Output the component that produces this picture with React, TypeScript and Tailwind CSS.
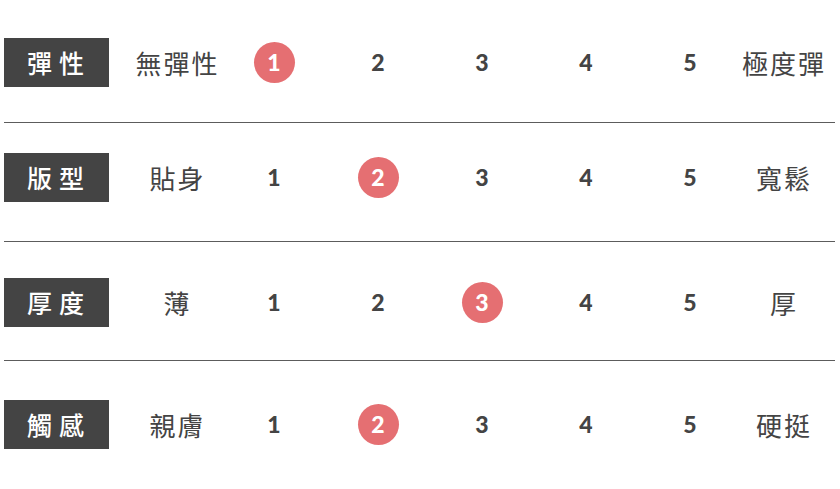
const rows = [
  { label: '彈性', low: '無彈性', high: '極度彈', value: 1, pad: 'pt-[38px] pb-[35px]' },
  { label: '版型', low: '貼身', high: '寬鬆', value: 2, pad: 'pt-[30px] pb-[39px]' },
  { label: '厚度', low: '薄', high: '厚', value: 3, pad: 'pt-[36px] pb-[33px]' },
  { label: '觸感', low: '親膚', high: '硬挺', value: 2, pad: 'pt-[39px] pb-[30px]' },
]

const cjk = 'font-["Noto_Sans_CJK_TC","Noto_Sans",sans-serif]'

function Scale({ value }: { value: number }) {
  return (
    <>
      {[1, 2, 3, 4, 5].map((n) => (
        <div key={n} className="flex items-center justify-center">
          {n === value ? (
            <span className="w-[41px] h-[41px] rounded-full bg-[#e56f72] text-white flex items-center justify-center text-[23px] font-black leading-none font-['Lato',sans-serif]">
              {n}
            </span>
          ) : (
            <span className="text-[23px] font-black text-[#444] leading-none font-['Lato',sans-serif]">{n}</span>
          )}
        </div>
      ))}
    </>
  )
}

export default function App() {
  return (
    <div className="bg-white w-[840px] h-[489px] overflow-hidden">
      <div className="ml-[4px] w-[831px]">
        {rows.map((row, i) => (
          <div
            key={row.label}
            className={`grid grid-cols-[105px_113px_repeat(5,104px)_1fr] items-center ${row.pad} ${
              i < rows.length - 1 ? 'border-b border-[#5c5c5c]' : ''
            }`}
          >
            {/* category tag */}
            <div
              className={`h-[49px] bg-[#444] text-white flex items-center justify-center text-[25px] font-medium tracking-[7px] pl-[5px] ${cjk}`}
            >
              {row.label}
            </div>
            <div className={`pl-[24px] text-center text-[26px] text-[#444] tracking-[2px] ${cjk}`}>{row.low}</div>
            <Scale value={row.value} />
            <div className={`pr-[9px] text-center text-[26px] text-[#444] tracking-[2px] ${cjk}`}>{row.high}</div>
          </div>
        ))}
      </div>
    </div>
  )
}
